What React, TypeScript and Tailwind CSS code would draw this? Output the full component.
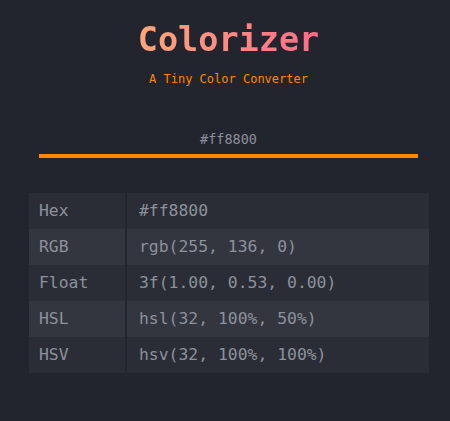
import { useState } from "react"

const rows = [
  { label: "Hex", value: "#ff8800" },
  { label: "RGB", value: "rgb(255, 136, 0)" },
  { label: "Float", value: "3f(1.00, 0.53, 0.00)" },
  { label: "HSL", value: "hsl(32, 100%, 50%)" },
  { label: "HSV", value: "hsv(32, 100%, 100%)" },
]

function App() {
  const [color, setColor] = useState("#ff8800")

  return (
    <div className="min-h-[421px] bg-[#22252d] font-['DejaVu_Sans_Mono',monospace] pt-[20px]">
      <header className="flex flex-col items-center pl-[7px]">
        <h1 className="text-[33.5px] leading-[40px] font-bold bg-gradient-to-r from-[#ffa679] to-[#ff6b88] bg-clip-text text-transparent">
          Colorizer
        </h1>
        <p className="mt-[11px] text-[12px] leading-[16px] text-[#ff8800]">A Tiny Color Converter</p>
      </header>

      <section className="ml-[39px] w-[379px] mt-[40px]">
        <input
          className="w-full bg-transparent text-center text-[13.5px] leading-[18px] text-[#8a8f99] caret-[#8a8f99] outline-none pb-[6px] border-b-4 border-[#ff8800]"
          value={color}
          onChange={(e) => setColor(e.target.value)}
          autoFocus
        />
      </section>

      <section className="ml-[29px] w-[400px] mt-[35px]">
        {rows.map((r, i) => (
          <div
            key={r.label}
            className={`flex h-[36px] items-center text-[16.4px] text-[#8c919b] ${i % 2 === 0 ? "bg-[#2a2d36]" : "bg-[#33363f]"}`}
          >
            <div className="w-[98px] h-full flex items-center pl-[10px] border-r-2 border-[#22252d]">{r.label}</div>
            <div className="pl-[12px]">{r.value}</div>
          </div>
        ))}
      </section>
    </div>
  )
}

export default App
